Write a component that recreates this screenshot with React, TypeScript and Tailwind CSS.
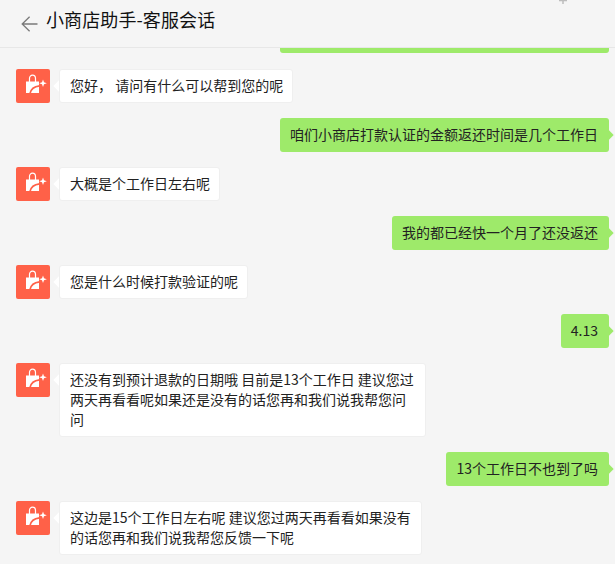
const font = { fontFamily: '"Noto Sans CJK SC", sans-serif' };

function Avatar() {
  return (
    <div className="w-[34px] h-[34px] rounded-[2px] bg-[#ff6148] shrink-0">
      <svg width="34" height="34" viewBox="0 0 34 34">
        <path d="M10 12.5h13v11.5H10z" fill="#fff" />
        <path d="M13.5 13V9.4C13.5 7.5 14.8 6.2 16.5 6.2s3 1.3 3 3.2V13" fill="none" stroke="#fff" strokeWidth="1.2" />
        <path d="M14 24.5c.8-4 4-6.9 9.5-7.6" fill="none" stroke="#ff6148" strokeWidth="1.6" />
        <path d="M27 10.5l1 2.8 2.8 1-2.8 1-1 2.8-1-2.8-2.8-1 2.8-1z" fill="#fff" />
      </svg>
    </div>
  );
}

function Left({ children, w }: { children: React.ReactNode; w?: string }) {
  return (
    <div className="flex pl-4 items-start">
      <Avatar />
      <div className="relative ml-[9px]">
        <div className="absolute left-[-4px] top-[13px] w-2 h-2 rotate-45 bg-white" />
        <div className={`relative bg-white rounded-[3px] border border-[#efefef] pl-[10px] pr-[9px] pt-[5px] pb-[7px] text-[14px] leading-[20px] text-[#222] ${w ?? ""}`}>
          {children}
        </div>
      </div>
    </div>
  );
}

function Right({ children }: { children: React.ReactNode }) {
  return (
    <div className="flex justify-end pr-[6px]">
      <div className="relative">
        <div className="absolute right-[-3px] top-[13px] w-2 h-2 rotate-45 bg-[#9eea6a]" />
        <div className="relative bg-[#9eea6a] rounded-[3px] pl-[10px] pr-[11px] pt-[6px] pb-[8px] text-[14px] leading-[20px] text-[#222]">
          {children}
        </div>
      </div>
    </div>
  );
}

export default function App() {
  return (
    <div className="relative w-[615px] h-[564px] overflow-hidden bg-[#f5f5f5]" style={font}>
      <header className="h-[48px] border-b border-[#e7e7e7] flex items-start pl-[21px]">
        <svg width="17" height="16" viewBox="0 0 17 16" className="mt-[16px]">
          <path d="M16.5 8H1.2M8.6 .8L1.2 8l7.4 7.2" fill="none" stroke="#7a7a7a" strokeWidth="1.3" />
        </svg>
        <h1 className="ml-[8px] mt-[7px] text-[18px] leading-[24px] text-[#111] font-normal tracking-[0.1px]">小商店助手-客服会话</h1>
      </header>
      <svg width="10" height="4" viewBox="0 0 10 4" className="absolute left-[558px] top-0">
        <path d="M5 0v4M1 .5h8" stroke="#bdbdbd" strokeWidth="1.5" fill="none" />
      </svg>
      <div className="flex justify-end pr-[6px]">
        <div className="w-[329px] h-[5px] bg-[#9eea6a] rounded-b-[3px]" />
      </div>
      <main className="flex flex-col gap-[15px] pt-[16px]">
        <Left>您好， 请问有什么可以帮到您的呢</Left>
        <Right>咱们小商店打款认证的金额返还时间是几个工作日</Right>
        <Left>大概是个工作日左右呢</Left>
        <Right>我的都已经快一个月了还没返还</Right>
        <Left>您是什么时候打款验证的呢</Left>
        <Right>4.13</Right>
        <Left w="w-[367px]">还没有到预计退款的日期哦 目前是13个工作日 建议您过两天再看看呢如果还是没有的话您再和我们说我帮您问问</Left>
        <Right>13个工作日不也到了吗</Right>
        <Left w="w-[363px]">这边是15个工作日左右呢 建议您过两天再看看如果没有的话您再和我们说我帮您反馈一下呢</Left>
      </main>
    </div>
  );
}
